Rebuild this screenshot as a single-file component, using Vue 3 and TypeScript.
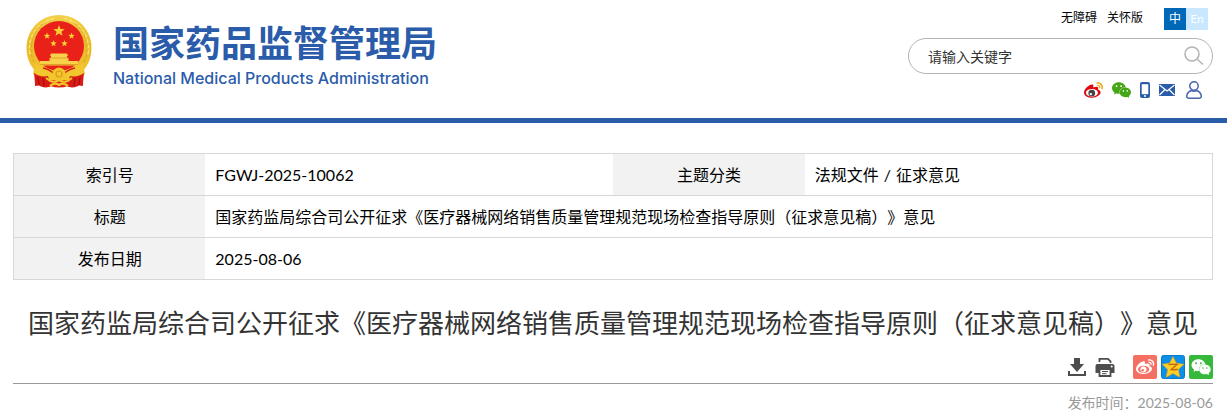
<script setup lang="ts">
interface Star {
  x: number
  y: number
  r: number
}

const stars: Star[] = [
  { x: 33, y: 17, r: 6 },
  { x: 21, y: 22, r: 3.4 },
  { x: 45.5, y: 22, r: 3.4 },
  { x: 27.5, y: 29.5, r: 3.4 },
  { x: 38.5, y: 29.5, r: 3.4 },
]

function starPoints({ x, y, r }: Star): string {
  return Array.from({ length: 10 }, (_, i) => {
    const radius = i % 2 === 0 ? r : r * 0.42
    const angle = (Math.PI / 5) * i - Math.PI / 2
    return `${(x + radius * Math.cos(angle)).toFixed(2)},${(y + radius * Math.sin(angle)).toFixed(2)}`
  }).join(' ')
}

const docTitle = '国家药监局综合司公开征求《医疗器械网络销售质量管理规范现场检查指导原则（征求意见稿）》意见'
const published = '2025-08-06'

const weiboBody =
  'M18.059 11.649c-.346-.105-.57-.18-.405-.615.375-.977.42-1.804 0-2.404-.781-1.112-2.915-1.053-5.364-.03 0 0-.766.331-.571-.271.376-1.217.315-2.224-.27-2.809-1.338-1.337-4.869.045-7.888 3.08C1.309 10.87 0 13.273 0 15.348c0 3.981 5.099 6.395 10.086 6.395 6.536 0 10.888-3.801 10.888-6.82 0-1.822-1.547-2.854-2.915-3.284z'
const weiboWaves =
  'M19.967 6.557c-.766-.856-1.908-1.187-2.96-.962-.436.09-.706.511-.616.932.09.42.511.691.932.602.511-.105 1.067.044 1.442.465.376.421.466.977.316 1.473-.136.406.089.856.51.992.405.119.857-.105.992-.512.33-1.021.12-2.178-.616-2.99zM22.385 4.362c-1.576-1.757-3.905-2.419-6.054-1.968-.496.104-.812.587-.706 1.081.104.496.586.813 1.082.707 1.532-.331 3.185.15 4.296 1.383 1.112 1.246 1.429 2.943.947 4.416-.165.48.106 1.007.586 1.157.479.165.991-.104 1.157-.586.675-2.088.241-4.478-1.308-6.19z'
const wechat =
  'M8.691 2.188C3.891 2.188 0 5.476 0 9.53c0 2.212 1.17 4.203 3.002 5.55a.59.59 0 0 1 .213.665l-.39 1.48c-.019.07-.048.141-.048.213 0 .163.13.295.29.295a.326.326 0 0 0 .167-.054l1.903-1.114a.864.864 0 0 1 .717-.098 10.16 10.16 0 0 0 2.837.403c.276 0 .543-.027.811-.05-.857-2.578.157-4.972 1.932-6.446 1.703-1.415 3.882-1.98 5.853-1.838-.576-3.583-4.196-6.348-8.596-6.348zM5.785 5.991c.642 0 1.162.529 1.162 1.18a1.17 1.17 0 0 1-1.162 1.178A1.17 1.17 0 0 1 4.623 7.17c0-.651.52-1.18 1.162-1.18zm5.813 0c.642 0 1.162.529 1.162 1.18a1.17 1.17 0 0 1-1.162 1.178 1.17 1.17 0 0 1-1.162-1.178c0-.651.52-1.18 1.162-1.18zm5.34 2.867c-1.797-.052-3.746.512-5.28 1.786-1.72 1.428-2.687 3.72-1.78 6.22.942 2.453 3.666 4.229 6.884 4.229.826 0 1.622-.12 2.361-.336a.722.722 0 0 1 .598.082l1.584.926a.272.272 0 0 0 .14.047c.134 0 .24-.111.24-.247 0-.06-.023-.12-.038-.177l-.327-1.233a.582.582 0 0 1-.023-.156.49.49 0 0 1 .201-.398C23.024 18.48 24 16.82 24 14.98c0-3.21-2.931-5.837-6.656-6.088V8.89c-.135-.01-.27-.027-.407-.03zm-2.53 3.274c.535 0 .969.44.969.982a.976.976 0 0 1-.969.983.976.976 0 0 1-.969-.983c0-.542.434-.982.97-.982zm4.844 0c.535 0 .969.44.969.982a.976.976 0 0 1-.969.983.976.976 0 0 1-.969-.983c0-.542.434-.982.969-.982z'
</script>

<template>
  <div class="page">
    <header class="header">
      <a class="brand" href="#">
        <svg class="emblem" viewBox="0 0 66 74" aria-hidden="true">
          <defs>
            <linearGradient id="gold" x1="0" y1="0" x2="0" y2="1">
              <stop offset="0" stop-color="#f2d04a" />
              <stop offset="0.5" stop-color="#e8b92a" />
              <stop offset="1" stop-color="#f0c030" />
            </linearGradient>
          </defs>
          <path d="M33 1C14.500 1 .5 15.500 .5 34c0 10.500 4 19 11 25h43c7-6 11-14.500 11-25C65.500 15.500 51.500 1 33 1z" fill="url(#gold)" />
          <path d="M4 40C1 24 12 6 30 4M62 40C65 24 54 6 36 4" fill="none" stroke="#f9e36c" stroke-width="1.600" stroke-dasharray="4 1.500" />
          <path d="M8 48C2 36 5 18 18 9M58 48C64 36 61 18 48 9" fill="none" stroke="#d9a320" stroke-width="1" stroke-dasharray="3 2" />
          <circle cx="33" cy="32" r="25" fill="#e92119" />
          <polygon v-for="(star, i) in stars" :key="i" :points="starPoints(star)" fill="#f9cf35" />
          <path d="M25 39.500h16l1 2.500h-1v2h1.500v3H52v4.500H14V47h9.500v-3H25v-2h-1z" fill="#f8d04a" />
          <path d="M24 44h18M14 50.500h38" stroke="#e0a126" stroke-width="1" />
          <path d="M9 50c6 2 14 4 20 9h8c6-5 14-7 20-9l2 10-12 6H19L7 60z" fill="#f2c62e" />
          <path d="M17 54c5 1 9 3 12 7M49 54c-5 1-9 3-12 7" fill="none" stroke="#d61e16" stroke-width="1.300" />
          <path d="M8 59c4 3 9 4 14 3l3 10c-3 2-7 1.500-10 .5l-2-1-4 .5c0-4-.5-9-1-13zM58 59c-4 3-9 4-14 3l-3 10c3 2 7 1.500 10 .5l2-1 4 .5c0-4 .5-9 1-13z" fill="#d91b16" />
          <path d="M12 63l1 8M17 64l1 8M54 63l-1 8M49 64l-1 8" stroke="#a80d0d" stroke-width="1.200" />
          <path d="M24 66h18v6c-6 2-12 2-18 0z" fill="#dd251b" />
          <circle cx="33" cy="60" r="6.500" fill="#f3c62b" />
          <circle cx="33" cy="60" r="3" fill="none" stroke="#d99b1d" stroke-width="1.200" />
          <path d="M20 64c5 4 8 5 13 2 5 3 8 2 13-2M24 72c4-3 6-3 9-1 3-2 5-2 9 1" fill="none" stroke="#f3c62b" stroke-width="2.200" />
        </svg>
        <span class="brand-text">
          <span class="brand-cn">国家药品监督管理局</span>
          <span class="brand-en" lang="en">National Medical Products Administration</span>
        </span>
      </a>

      <div class="tools">
        <nav class="quick">
          <a href="#">无障碍</a>
          <a href="#">关怀版</a>
          <span class="langs">
            <a class="lang current" href="#">中</a><a class="lang" href="#">En</a>
          </span>
        </nav>
        <form class="search" @submit.prevent>
          <input type="text" placeholder="请输入关键字" aria-label="请输入关键字" />
          <button type="submit" aria-label="搜索">
            <svg viewBox="0 0 20 20" aria-hidden="true" fill="none" stroke="#b3b3b3" stroke-width="1.500">
              <circle cx="8" cy="8" r="7" /><path d="M13 13l6 5.500" />
            </svg>
          </button>
        </form>
        <div class="social">
          <a href="#" aria-label="微博">
            <svg class="wide" viewBox="0 2 24 20"><path :d="weiboBody" fill="#e0060e" /><path :d="weiboWaves" fill="#f0a30a" /><ellipse cx="10" cy="15.600" rx="7.600" ry="4.900" fill="#fff" /><circle cx="9.800" cy="16" r="4.200" fill="#444" /><circle cx="8.600" cy="17.200" r="1.500" fill="#fff" /></svg>
          </a>
          <a href="#" aria-label="微信">
            <svg class="wide" viewBox="0 2 24 20"><path :d="wechat" fill="#46a716" /></svg>
          </a>
          <a href="#" aria-label="手机版">
            <svg class="phone" viewBox="0 0 10 16"><rect width="10" height="16" rx="2" fill="#2a5caa" /><path d="M1.700 2.200h6.600v10H1.700z" fill="#fff" /><circle cx="5" cy="14" r="1" fill="#fff" /></svg>
          </a>
          <a href="#" aria-label="邮箱">
            <svg class="mail" viewBox="0 0 16 12"><path d="M0 0h16v12H0z" fill="#2a5caa" /><path d="M.5 1L8 7l7.500-6M.5 11L6 5.500M15.500 11L10 5.500" fill="none" stroke="#fff" stroke-width="1.200" /></svg>
          </a>
          <a class="account" href="#" aria-label="个人中心">
            <svg class="user" viewBox="0 0 16 18" fill="none" stroke="#4a65ad" stroke-width="1.500"><circle cx="8" cy="5" r="4.200" /><path d="M3 17.200C.5 17.200.5 15.500.9 14 1.500 11.500 4 10 5.500 9.500 7 10.300 9 10.300 10.500 9.500c1.500.5 4 2 4.600 4.500.4 1.500.4 3.200-2.100 3.200z" /></svg>
          </a>
        </div>
      </div>
    </header>

    <main class="content">
      <table class="meta">
        <tbody>
          <tr>
            <th scope="row">索引号</th>
            <td>FGWJ-2025-10062</td>
            <th scope="row">主题分类</th>
            <td>法规文件<span class="separator">/</span>征求意见</td>
          </tr>
          <tr>
            <th scope="row">标题</th>
            <td colspan="3">{{ docTitle }}</td>
          </tr>
          <tr>
            <th scope="row">发布日期</th>
            <td colspan="3">{{ published }}</td>
          </tr>
        </tbody>
      </table>

      <h1>{{ docTitle }}</h1>

      <div class="actions">
        <button type="button" aria-label="下载">
          <svg class="tool" viewBox="0 0 20 20" fill="#4d4d4d"><path d="M7 1h6v6h4l-7 8-7-8h4z" /><path d="M1 14h2v3h14v-3h2v5H1z" /></svg>
        </button>
        <button class="print" type="button" aria-label="打印">
          <svg class="tool" viewBox="0 0 20 20"><path d="M4.500 5V1.800h8.500l2.500 2.500V6" fill="#fff" stroke="#4d4d4d" stroke-width="1.800" /><path d="M2.500 7h15A2 2 0 0 1 19.500 9v7h-19V9a2 2 0 0 1 2-2z" fill="#4d4d4d" /><path d="M4.500 12h11v7h-11z" fill="#fff" stroke="#4d4d4d" stroke-width="1.800" /><path d="M7 14.500h6M7 16.700h4.500" stroke="#4d4d4d" /><circle cx="16.700" cy="9.500" r="1" fill="#fff" /></svg>
        </button>
        <button type="button" aria-label="分享到微博">
          <svg class="share" viewBox="0 0 24 24"><rect width="24" height="24" rx="2" fill="#f56f62" /><g transform="translate(3 2.500) scale(.76)"><path :d="weiboBody" fill="#fff" /><path :d="weiboWaves" fill="#fff" /><ellipse cx="10" cy="15.600" rx="7.400" ry="4.900" fill="#f56f62" /><circle cx="9.800" cy="15.800" r="4" fill="#fff" /><circle cx="8.800" cy="16.800" r="1.700" fill="#f56f62" /></g></svg>
        </button>
        <button type="button" aria-label="分享到QQ空间">
          <svg class="share" viewBox="0 0 24 24"><rect x=".5" y=".5" width="23" height="23" rx="2" fill="#0b8fe8" stroke="#0878c8" /><path d="M12 1.500l3.300 6.700 7.500 1-5.500 5.200 1.500 7.800L12 18.500l-6.800 3.700 1.500-7.800L1.200 9.200l7.500-1z" fill="#ffcf28" stroke="#e8a512" stroke-width=".6" /><path d="M7.500 9.500c3-.4 6-.4 8.500 0L10.200 14.500c2.300.5 4.500.4 6.500-.2" fill="none" stroke="#c46d08" stroke-width="1.500" /></svg>
        </button>
        <button type="button" aria-label="分享到微信">
          <svg class="share" viewBox="0 0 24 24"><rect width="24" height="24" rx="2" fill="#35b83b" /><path :d="wechat" transform="translate(2.500 2.500) scale(.8)" fill="#fff" /></svg>
        </button>
      </div>

      <p class="published">发布时间：{{ published }}</p>
    </main>
  </div>
</template>

<style>
body {
  margin: 0;
  background: #fff;
}
</style>

<style scoped>
.page {
  font-family: Lato, "Noto Sans CJK SC", sans-serif;
  font-size: 16px;
  color: #000;
  text-spacing-trim: space-all;
}

a {
  color: inherit;
  text-decoration: none;
}

button {
  padding: 0;
  border: 0;
  background: none;
  cursor: pointer;
}

svg {
  display: block;
}

.header {
  display: flex;
  justify-content: space-between;
  align-items: flex-start;
  padding: 8px 14px 19px 26px;
  border-bottom: 5px solid #2a5caa;
}

.brand {
  display: flex;
  gap: 21px;
  padding-top: 6px;
  color: #2a5caa;
}

.emblem {
  width: 66px;
  height: 74px;
}

.brand-text {
  display: flex;
  flex-direction: column;
  white-space: nowrap;
}

.brand-cn {
  font: bold 36px/54px "Noto Sans CJK SC", sans-serif;
}

.brand-en {
  font: 500 16px/20px Inter, sans-serif;
}

.tools {
  display: flex;
  flex-direction: column;
  align-items: flex-end;
}

.quick {
  display: flex;
  gap: 10px;
  padding-right: 5px;
  font-size: 12px;
  line-height: 20px;
}

.langs {
  display: flex;
  margin-left: 11px;
}

.lang {
  width: 22px;
  line-height: 22px;
  text-align: center;
  color: #fff;
  background: #c9e7ff;
}

.lang.current {
  background: #0068b7;
}

.search {
  display: flex;
  align-items: center;
  box-sizing: border-box;
  width: 305px;
  height: 36px;
  margin-top: 8px;
  padding: 0 8px 0 19px;
  border: 1px solid #b3b3b3;
  border-radius: 18px;
}

.search input {
  flex: 1;
  min-width: 0;
  padding: 0;
  border: 0;
  outline: 0;
  background: none;
  font: 14px/20px "Noto Sans CJK SC", sans-serif;
}

.search input::placeholder {
  color: #333;
  opacity: 1;
}

.search svg {
  width: 20px;
  height: 20px;
}

.social {
  display: flex;
  align-items: center;
  gap: 9px;
  margin-top: 7px;
  padding-right: 11px;
}

.account {
  margin-left: 2px;
}

.wide {
  width: 19px;
  height: 16px;
}

.phone {
  width: 10px;
  height: 16px;
}

.mail {
  width: 16px;
  height: 12px;
}

.user {
  width: 16px;
  height: 18px;
}

.content {
  padding: 30px 14px 0 13px;
}

.meta {
  width: 100%;
  table-layout: fixed;
  border: 1px solid #d7d7d7;
  border-collapse: collapse;
}

.meta th,
.meta td {
  height: 41px;
  padding: 0 10px;
  border-bottom: 1px solid #d7d7d7;
  font-weight: normal;
  line-height: 24px;
}

.meta th {
  width: 16%;
  box-sizing: border-box;
  background: #f2f2f2;
  text-align: center;
}

.meta td {
  text-align: left;
}

.separator {
  padding: 0 5px;
}

h1 {
  margin: 24px 0 0;
  font-size: 26px;
  font-weight: normal;
  line-height: 38px;
  text-align: center;
  color: #333;
}

.actions {
  display: flex;
  justify-content: flex-end;
  align-items: center;
  gap: 4px;
  margin-top: 13px;
  padding-bottom: 4px;
  border-bottom: 1px solid #999;
}

.tool {
  width: 20px;
  height: 20px;
}

.print {
  margin: 0 14px 0 4px;
}

.share {
  width: 24px;
  height: 24px;
}

.published {
  margin: 9px 0 0;
  font-size: 14px;
  line-height: 20px;
  text-align: right;
  color: #999;
}
</style>
